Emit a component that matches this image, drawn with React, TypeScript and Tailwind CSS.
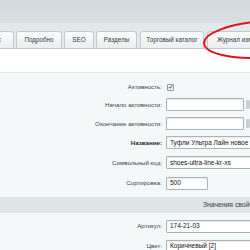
import React from "react";

const font = { fontFamily: '"Liberation Sans", Arial, sans-serif' };

function Tab({ w, label, ml }: { w: string; label: string; ml?: string }) {
  return (
    <div
      className={`${w} ${ml ?? ""} h-[17px] shrink-0 rounded-t-[3px] border border-b-0 border-[#c3cbce] bg-gradient-to-b from-[#fbfcfc] to-[#eaeef0] flex items-center justify-center text-[6.3px] text-[#2f3b40] whitespace-nowrap overflow-hidden`}
    >
      {label}
    </div>
  );
}

function Label({ children, bold }: { children: React.ReactNode; bold?: boolean }) {
  return (
    <div
      className={`w-[166px] shrink-0 pr-[4px] text-right text-[6.2px] whitespace-nowrap ${bold ? "font-bold text-[#1e282c]" : "text-[#3a454a]"}`}
    >
      {children}
    </div>
  );
}

function Input({ value, w }: { value?: string; w: string }) {
  return (
    <div
      className={`${w} h-[13px] shrink-0 border border-[#a8b4b9] bg-white shadow-[inset_0_1px_1px_rgba(0,0,0,0.08)] rounded-[1px] flex items-center pl-[3px] text-[6.5px] text-[#111] whitespace-nowrap overflow-hidden`}
    >
      {value}
    </div>
  );
}

export default function App() {
  return (
    <div className="relative w-[250px] h-[250px] overflow-hidden bg-[#f4f8f9]" style={font}>
      {/* top gray bar */}
      <div className="h-[23px] bg-gradient-to-b from-[#d2d9dc] to-[#d9dfe2]" />
      {/* tabs row */}
      <div className="h-[25px] bg-[#e3e8ea] flex items-end gap-[2px]">
        <Tab w="w-[44px]" ml="ml-[-30px]" label="Анонс" />
        <Tab w="w-[46px]" label="Подробно" />
        <Tab w="w-[30px]" label="SEO" />
        <Tab w="w-[41px]" label="Разделы" />
        <Tab w="w-[64px]" ml="ml-[1px]" label="Торговый каталог" />
        <div className="ml-[1px] w-[70px] h-[17px] shrink-0 rounded-t-[3px] border border-b-0 border-[#c3cbce] bg-gradient-to-b from-[#fbfcfc] to-[#eaeef0] flex items-center pl-[9px] text-[6.3px] text-[#2f3b40] whitespace-nowrap overflow-hidden">
          Журнал изменений
        </div>
      </div>
      {/* white strip */}
      <div className="h-[25px] bg-white border-t border-[#c3cbce] border-b border-b-[#e2e8ea]" />

      {/* form */}
      <div className="pt-[6px] flex flex-col">
        <div className="h-[16px] flex items-center">
          <Label>Активность:</Label>
          <div className="ml-[1px] w-[7px] h-[7px] border border-[#8f9ba0] bg-[#eef1f2] rounded-[1px] flex items-center justify-center">
            <svg width="6" height="6" viewBox="0 0 6 6">
              <path d="M1 3 L2.4 4.5 L5 1.3" stroke="#3b4549" strokeWidth="1.1" fill="none" />
            </svg>
          </div>
        </div>
        <div className="h-[19px] flex items-center">
          <Label>Начало активности:</Label>
          <Input w="w-[78px]" />
          <div className="ml-[2px] w-[4px] h-[9px] bg-[#c9d1d4] rounded-[1px]" />
        </div>
        <div className="h-[19px] flex items-center">
          <Label>Окончание активности:</Label>
          <Input w="w-[78px]" />
          <div className="ml-[2px] w-[4px] h-[9px] bg-[#c9d1d4] rounded-[1px]" />
        </div>
        <div className="h-[19px] flex items-center">
          <Label bold>Название:</Label>
          <Input w="w-[120px]" value="Туфли Ультра Лайн новое" />
        </div>
        <div className="h-[21px] flex items-center">
          <Label>Символьный код:</Label>
          <Input w="w-[120px]" value="shoes-ultra-line-kr-xs" />
        </div>
        <div className="h-[20px] flex items-center">
          <Label>Сортировка:</Label>
          <Input w="w-[42px]" value="500" />
        </div>
        <div className="h-[4px]" />
        <div className="h-[16px] bg-[#dfe5e7] flex items-center pl-[203px] text-[6.8px] text-[#2f3b40] whitespace-nowrap overflow-hidden">
          Значения свойств
        </div>
        <div className="h-[3px]" />
        <div className="h-[20px] flex items-center">
          <Label>Артикул:</Label>
          <Input w="w-[120px]" value="174-21-03" />
        </div>
        <div className="h-[20px] flex items-center">
          <Label>Цвет:</Label>
          <Input w="w-[120px]" value="Коричневый [2]" />
        </div>
      </div>

      {/* red ellipse annotation */}
      <svg className="absolute left-0 top-0 pointer-events-none" width="250" height="250">
        <ellipse cx="262" cy="39.5" rx="58" ry="18" fill="none" stroke="#e3121c" strokeWidth="2" transform="rotate(-4 262 39.5)" />
      </svg>
    </div>
  );
}
